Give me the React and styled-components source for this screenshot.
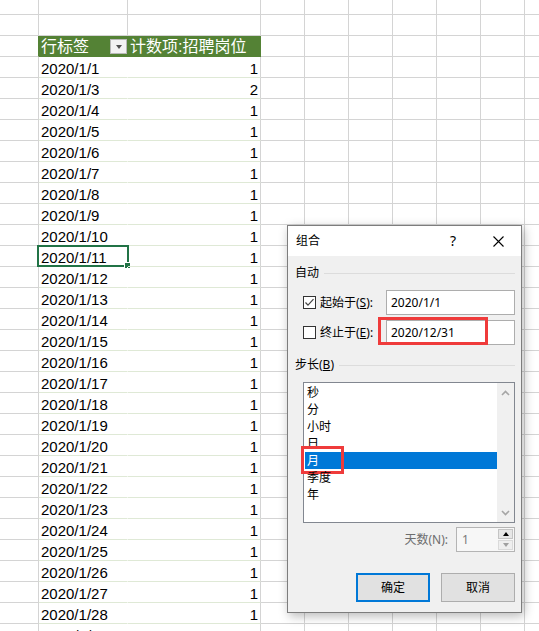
import styled, { createGlobalStyle } from "styled-components";

const GlobalStyle = createGlobalStyle`
  html, body {
    margin: 0;
    padding: 0;
    background: #fff;
    overflow: hidden;
  }
  body {
    font-family: "Liberation Sans", "Noto Sans CJK SC", sans-serif;
    color: #000;
  }
`;

const Page = styled.div`
  position: relative;
  width: 539px;
  height: 631px;
  overflow: hidden;
`;

const Sheet = styled.div`
  display: grid;
  grid-template-columns: 39px 89px 133px repeat(7, 44px);
  grid-template-rows: 15px;
  grid-auto-rows: 21px;
`;

const Cell = styled.div`
  box-sizing: border-box;
  position: relative;
  border-right: 1px solid ${(p) => (p.$open ? "#fff" : "#d4d4d4")};
  border-bottom: 1px solid ${(p) => (p.$pivot ? "#dfe9d6" : "#d4d4d4")};
  padding: 3px 2px 0 2px;
  font-size: 15px;
  line-height: 17px;
  white-space: nowrap;
  text-align: ${(p) => p.$align || "left"};
`;

const HeadCell = styled.div`
  box-sizing: border-box;
  display: flex;
  align-items: center;
  justify-content: space-between;
  padding: 1px 0 0 2px;
  background: ${(p) => (p.$blank ? "#fff" : "#548235")};
  border-right: 1px solid ${(p) => (p.$blank ? "#548235" : "#548235")};
  border-bottom: 1px solid ${(p) => (p.$blank ? "#d4d4d4" : "#548235")};
  color: #fff;
  font-family: "Liberation Sans", "Noto Sans CJK SC", sans-serif;
  font-size: 16px;
  line-height: 18px;
  white-space: nowrap;
`;

const FilterButton = styled.span`
  width: 17px;
  height: 15px;
  box-sizing: border-box;
  border: 1px solid #b9b9b9;
  background: #f3f3f3;
  display: flex;
  align-items: center;
  justify-content: center;

  &::after {
    content: "";
    border-left: 3.5px solid transparent;
    border-right: 3.5px solid transparent;
    border-top: 4px solid #505050;
    margin-top: 1px;
  }
`;

const Selection = styled.div`
  position: absolute;
  left: -2px;
  top: -1px;
  width: 92px;
  height: 22px;
  box-sizing: border-box;
  border: 2px solid #217346;

  &::after {
    content: "";
    position: absolute;
    left: 86px;
    top: 16px;
    width: 5px;
    height: 5px;
    background: #217346;
    box-shadow: 0 0 0 1px #fff;
  }
`;

/* ---------- dialog ---------- */

const Dialog = styled.div`
  position: absolute;
  left: 287px;
  top: 225px;
  width: 235px;
  height: 388px;
  box-sizing: border-box;
  border: 1px solid #7d7d7d;
  background: #f0f0f0;
  box-shadow: 2px 3px 10px rgba(0, 0, 0, 0.28);
  display: flex;
  flex-direction: column;
  font-family: "Noto Sans", "Noto Sans CJK SC", sans-serif;
  font-size: 12px;
  line-height: 14px;
  color: #000;
`;

const TitleBar = styled.div`
  height: 30px;
  flex-shrink: 0;
  background: #fff;
  display: flex;
  align-items: center;
  padding-left: 8px;
`;

const Title = styled.span`
  flex: 1;
`;

const TitleButton = styled.span`
  width: ${(p) => p.$w}px;
  height: 30px;
  display: flex;
  align-items: center;
  justify-content: center;
  font-size: 14px;
`;

const Body = styled.div`
  flex: 1;
  display: flex;
  flex-direction: column;
  padding: 10px 6px 10px 7px;
`;

const SectionHead = styled.div`
  display: flex;
  align-items: center;
  gap: 5px;
  height: 14px;
  margin-top: ${(p) => p.$top || 0}px;

  &::after {
    content: "";
    flex: 1;
    border-top: 1px solid #dcdcdc;
  }
`;

const FieldRow = styled.div`
  display: flex;
  align-items: center;
  height: 25px;
  margin: ${(p) => p.$top}px 0 0 8px;
`;

const CheckBox = styled.span`
  width: 13px;
  height: 13px;
  box-sizing: border-box;
  border: 1px solid #333;
  background: #fff;
  display: flex;
  align-items: center;
  justify-content: center;
  margin-right: 4px;
`;

const InputWrap = styled.div`
  position: relative;
  margin-left: auto;
`;

const TextInput = styled.div`
  width: 129px;
  height: 25px;
  box-sizing: border-box;
  border: 1px solid #adadad;
  background: #fff;
  padding: 0 4px;
  display: flex;
  align-items: center;
`;

const RedMark = styled.div`
  position: absolute;
  left: ${(p) => p.$x}px;
  top: ${(p) => p.$y}px;
  width: ${(p) => p.$w}px;
  height: ${(p) => p.$h}px;
  box-sizing: border-box;
  border: 3px solid #ef3b3b;
  pointer-events: none;
`;

const ListBox = styled.div`
  display: flex;
  height: 141px;
  margin: 10px 0 0 8px;
  box-sizing: border-box;
  border: 1px solid #828790;
  background: #fff;
`;

const Items = styled.div`
  flex: 1;
  padding: 1px 0 0 1px;
`;

const Item = styled.div`
  position: relative;
  height: 17px;
  line-height: 17px;
  padding-left: 2px;
  background: ${(p) => (p.$active ? "#0078d7" : "transparent")};
  color: ${(p) => (p.$active ? "#fff" : "#000")};
`;

const ScrollBar = styled.div`
  width: 17px;
  background: #f0f0f0;
  display: flex;
  flex-direction: column;
  justify-content: space-between;
  align-items: center;
  padding: 7px 0 6px;
`;

const DaysRow = styled.div`
  display: flex;
  justify-content: flex-end;
  align-items: center;
  margin-top: 4px;
  height: 25px;
  color: #6d6d6d;
`;

const Spinner = styled.div`
  width: 59px;
  height: 25px;
  margin-left: 8px;
  box-sizing: border-box;
  border: 1px solid #b4b4b4;
  background: #f7f7f7;
  display: flex;
  padding: 1px;
`;

const SpinValue = styled.span`
  flex: 1;
  padding-left: 4px;
  line-height: 21px;
  color: #7a7a7a;
`;

const SpinButtons = styled.div`
  width: 15px;
  display: flex;
  flex-direction: column;
  gap: 1px;
`;

const SpinButton = styled.span`
  flex: 1;
  background: ${(p) => (p.$up ? "#e6e6e6" : "#efefef")};
  border: 1px solid ${(p) => (p.$up ? "#c4c4c4" : "#dadada")};
  display: flex;
  align-items: center;
  justify-content: center;

  &::after {
    content: "";
    border-left: 3px solid transparent;
    border-right: 3px solid transparent;
    ${(p) =>
      p.$up
        ? "border-bottom: 4px solid #000;"
        : "border-top: 4px solid #a0a0a0;"}
  }
`;

const Buttons = styled.div`
  display: flex;
  justify-content: flex-end;
  gap: 11px;
  margin-top: 21px;
`;

const Button = styled.span`
  width: 74px;
  height: 29px;
  box-sizing: border-box;
  background: #e1e1e1;
  border: ${(p) => (p.$primary ? "2px solid #0078d7" : "1px solid #adadad")};
  display: flex;
  align-items: center;
  justify-content: center;
`;

const Key = styled.u`
  text-underline-offset: 1px;
`;

const dates = [1, 3, 4, 5, 6, 7, 8, 9, 10, 11, 12, 13, 14, 15, 16, 17, 18, 19, 20, 21, 22, 23, 24, 25, 26, 27, 28, 29];
const steps = ["秒", "分", "小时", "日", "月", "季度", "年"];
const restCols = 7;

function BlankCells({ count }) {
  return Array.from({ length: count }, (_, i) => <Cell key={i} />);
}

function Chevron({ up }) {
  return (
    <svg width="9" height="6" viewBox="0 0 9 6">
      <polyline
        points={up ? "1,5 4.5,1.5 8,5" : "1,1 4.5,4.5 8,1"}
        fill="none"
        stroke="#a5a5a5"
        strokeWidth="1.6"
      />
    </svg>
  );
}

export default function App() {
  return (
    <Page>
      <GlobalStyle />
      <Sheet>
        <BlankCells count={10} />
        <BlankCells count={10} />

        <HeadCell $blank />
        <HeadCell>
          <span>行标签</span>
          <FilterButton />
        </HeadCell>
        <HeadCell>计数项:招聘岗位</HeadCell>
        <BlankCells count={restCols} />

        {dates.map((d) => (
          <Row key={d} day={d} />
        ))}
      </Sheet>

      <Dialog>
        <TitleBar>
          <Title>组合</Title>
          <TitleButton $w={44}>?</TitleButton>
          <TitleButton $w={46}>
            <svg width="11" height="11" viewBox="0 0 11 11">
              <path d="M0.5 0.5 L10.5 10.5 M10.5 0.5 L0.5 10.5" stroke="#000" strokeWidth="1.1" />
            </svg>
          </TitleButton>
        </TitleBar>

        <Body>
          <SectionHead>自动</SectionHead>

          <FieldRow $top={10}>
            <CheckBox>
              <svg width="11" height="11" viewBox="0 0 11 11">
                <polyline points="1.5,5.5 4,8.2 9.5,2.2" fill="none" stroke="#444" strokeWidth="1.2" />
              </svg>
            </CheckBox>
            <span>
              起始于(<Key>S</Key>):
            </span>
            <InputWrap>
              <TextInput>2020/1/1</TextInput>
            </InputWrap>
          </FieldRow>

          <FieldRow $top={5}>
            <CheckBox />
            <span>
              终止于(<Key>E</Key>):
            </span>
            <InputWrap>
              <TextInput>2020/12/31</TextInput>
              <RedMark $x={-8} $y={-3} $w={110} $h={28} />
            </InputWrap>
          </FieldRow>

          <SectionHead $top={13}>
            <span>
              步长(<Key>B</Key>)
            </span>
          </SectionHead>

          <ListBox>
            <Items>
              {steps.map((s) => (
                <Item key={s} $active={s === "月"}>
                  {s}
                  {s === "月" && <RedMark $x={-4} $y={-6} $w={43} $h={28} />}
                </Item>
              ))}
            </Items>
            <ScrollBar>
              <Chevron up />
              <Chevron />
            </ScrollBar>
          </ListBox>

          <DaysRow>
            <span>天数(N):</span>
            <Spinner>
              <SpinValue>1</SpinValue>
              <SpinButtons>
                <SpinButton $up />
                <SpinButton />
              </SpinButtons>
            </Spinner>
          </DaysRow>

          <Buttons>
            <Button $primary>确定</Button>
            <Button>取消</Button>
          </Buttons>
        </Body>
      </Dialog>
    </Page>
  );
}

function Row({ day }) {
  return (
    <>
      <Cell />
      <Cell $pivot $open>
        2020/1/{day}
        {day === 11 && <Selection />}
      </Cell>
      <Cell $pivot $align="right">
        {day === 3 ? 2 : 1}
      </Cell>
      <BlankCells count={restCols} />
    </>
  );
}
